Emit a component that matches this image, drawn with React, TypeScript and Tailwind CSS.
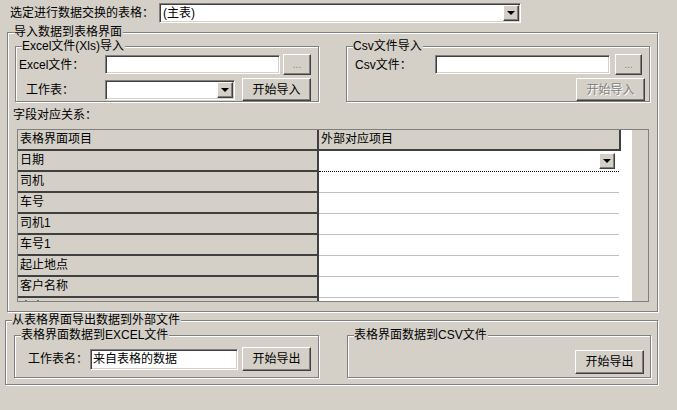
const sunken = "bg-white border-t border-l border-t-[#808080] border-l-[#808080] border-b border-r border-b-white border-r-white shadow-[inset_1px_1px_0_#404040,inset_-1px_-1px_0_#d4d0c8]"
const raised = "bg-[#d4d0c8] border border-t-white border-l-white border-b-[#404040] border-r-[#404040] shadow-[inset_-1px_-1px_0_#808080]"
const group = "border border-[#808080] shadow-[inset_1px_1px_0_white,1px_1px_0_white] relative"

function Legend({ text, className = "" }: { text: string; className?: string }) {
  return <span className={"absolute -top-[8px] bg-[#d4d0c8] leading-[14px] pr-[1px] " + className}>{text}</span>
}

function DropBtn() {
  return (
    <div className={raised + " w-[16px] h-[16px] flex items-center justify-center"}>
      <div className="w-0 h-0 border-l-[4px] border-r-[4px] border-t-[4px] border-l-transparent border-r-transparent border-t-black" />
    </div>
  )
}

function Combo({ w, text = "" }: { w: string; text?: string }) {
  return (
    <div className={sunken + " h-[20px] flex items-center justify-between pl-[3px] pr-[1px] " + w}>
      <span>{text}</span>
      <DropBtn />
    </div>
  )
}

function Button({ text, w, h = "h-[23px]", disabled = false }: { text: string; w: string; h?: string; disabled?: boolean }) {
  return (
    <div className={raised + " flex items-center justify-center " + w + " " + h + (disabled ? " text-[#808080] [text-shadow:1px_1px_0_white]" : "")}>
      {text}
    </div>
  )
}

const rows = ["日期", "司机", "车号", "司机1", "车号1", "起止地点", "客户名称", "客户"]

export default function App() {
  return (
    <div className="w-[677px] h-[410px] bg-[#d4d0c8] text-[12px] text-black overflow-hidden" style={{ fontFamily: '"Liberation Sans", "Noto Sans CJK SC", sans-serif' }}>
      <div className="flex items-center pt-[3px] pl-[10px]">
        <span className="w-[149px]">选定进行数据交换的表格：</span>
        <Combo w="w-[362px]" text="(主表)" />
      </div>

      {/* import group */}
      <div className={group + " mt-[9px] ml-[7px] w-[651px] h-[280px]"}>
        <Legend text="导入数据到表格界面" className="left-[6px]" />
        <div className="flex gap-[27px] mt-[13px] ml-[7px]">
          <div className={group + " w-[304px] h-[56px]"}>
            <Legend text="Excel文件(Xls)导入" className="left-[6px]" />
            <div className="flex items-center mt-[7px] ml-[3px]">
              <span className="w-[86px]">Excel文件：</span>
              <div className={sunken + " w-[175px] h-[19px]"} />
              <div className={raised + " w-[28px] h-[21px] ml-[3px] text-[#808080] text-[10px] flex items-center justify-center"}>...</div>
            </div>
            <div className="flex items-center mt-[3px] ml-[10px]">
              <span className="w-[79px]">工作表：</span>
              <Combo w="w-[130px]" />
              <Button text="开始导入" w="w-[69px] ml-[7px]" />
            </div>
          </div>
          <div className={group + " w-[304px] h-[56px]"}>
            <Legend text="Csv文件导入" className="left-[6px]" />
            <div className="flex items-center mt-[7px] ml-[8px]">
              <span className="w-[80px]">Csv文件：</span>
              <div className={sunken + " w-[175px] h-[19px]"} />
              <div className={raised + " w-[27px] h-[21px] ml-[5px] text-[#808080] text-[10px] flex items-center justify-center"}>...</div>
            </div>
            <div className="flex justify-end mt-[3px] mr-[4px]">
              <Button text="开始导入" w="w-[69px]" disabled />
            </div>
          </div>
        </div>
        <div className="ml-[5px] mt-[5px] leading-[16px]">字段对应关系：</div>
        <div className="ml-[9px] mt-[6px] w-[632px] h-[173px] border border-[#808080] flex overflow-hidden bg-[#d4d0c8]">
          <div className="flex flex-col w-[603px] bg-white">
            <div className="flex h-[21px] shrink-0">
              <div className="w-[301px] bg-[#d4d0c8] border-r-2 border-b-2 border-[#404040] pl-[2px] leading-[18px]">表格界面项目</div>
              <div className="w-[302px] bg-[#d4d0c8] border-r-2 border-b-2 border-[#404040] pl-[2px] leading-[18px]">外部对应项目</div>
            </div>
            {rows.map((r, i) => (
              <div key={r} className="flex h-[21px] shrink-0">
                <div className="w-[301px] bg-[#d4d0c8] border-r-2 border-b-2 border-[#404040] pl-[2px] leading-[18px]">{r}</div>
                <div className={"w-[300px] border-b border-[#c0c0c0] flex items-center justify-end pr-[4px] " + (i === 0 ? "border-dotted border-b-black" : "")}>
                  {i === 0 && <DropBtn />}
                </div>
              </div>
            ))}
          </div>
          <div className="w-[11px] bg-white" />
        </div>
      </div>

      {/* export group */}
      <div className={group + " mt-[8px] ml-[5px] w-[653px] h-[65px]"}>
        <Legend text="从表格界面导出数据到外部文件" className="left-[6px]" />
        <div className="flex gap-[28px] mt-[14px] ml-[8px]">
          <div className={group + " w-[305px] h-[43px]"}>
            <Legend text="表格界面数据到EXCEL文件" className="left-[6px]" />
            <div className="flex items-center mt-[11px] ml-[13px]">
              <span className="w-[62px]">工作表名：</span>
              <div className={sunken + " w-[148px] h-[21px] pl-[2px] leading-[19px]"}>来自表格的数据</div>
              <Button text="开始导出" w="w-[69px] ml-[4px]" h="h-[24px]" />
            </div>
          </div>
          <div className={group + " w-[304px] h-[43px]"}>
            <Legend text="表格界面数据到CSV文件" className="left-[6px]" />
            <div className="flex justify-end mt-[14px] mr-[6px]">
              <Button text="开始导出" w="w-[69px]" h="h-[24px]" />
            </div>
          </div>
        </div>
      </div>
    </div>
  )
}
